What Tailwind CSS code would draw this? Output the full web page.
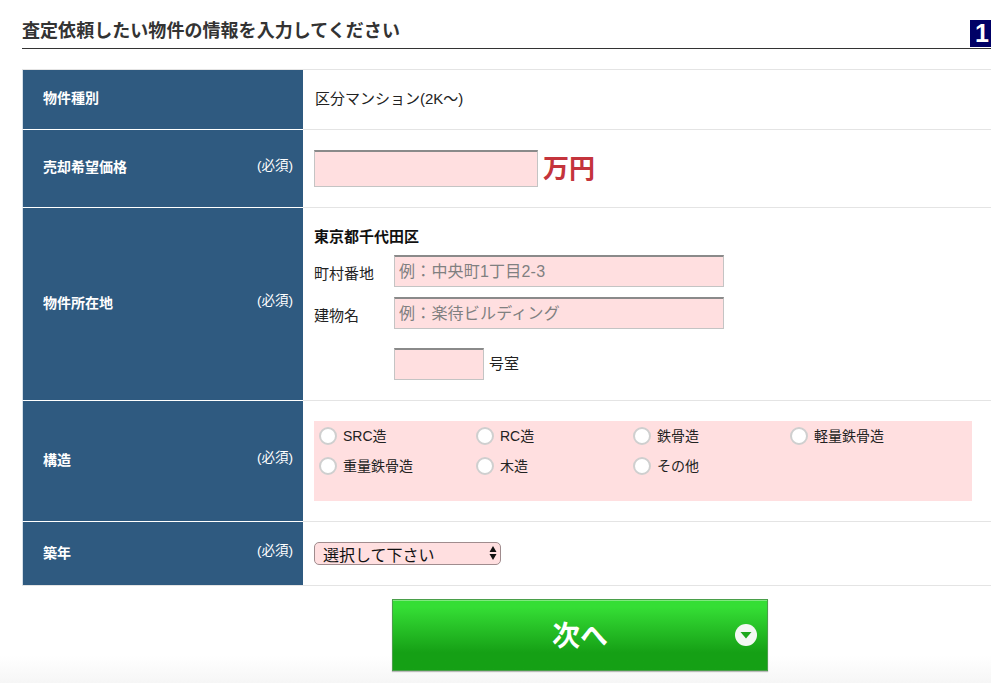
<!DOCTYPE html>
<html lang="ja">
  <head>
    <meta charset="UTF-8" />
    <title>査定依頼</title>
    <script src="https://cdn.jsdelivr.net/npm/@tailwindcss/browser@4"></script>
  </head>
  <body class="h-[683px] overflow-hidden bg-white font-['Liberation_Sans','Noto_Sans_CJK_JP',sans-serif] text-[15px] text-[#222]">
    <div class="relative h-[683px] overflow-hidden bg-gradient-to-b from-white from-[96%] to-[#f6f6f6] pl-[22px] pt-[20px]">
      <!-- heading -->
      <div class="flex h-[29px] w-[969px] items-start justify-between border-b border-[#333]">
        <h2 class="text-[18px] leading-[22px] tracking-[0.05px] font-bold text-[#333]">査定依頼したい物件の情報を入力してください</h2>
        <span class="h-[27px] w-[21px] bg-[#000066] pl-[5px] text-[25px] leading-[27px] font-bold text-white">1</span>
      </div>

      <!-- form table -->
      <div class="mt-[20px] w-[969px] border-t border-[#e4e4e4]">
        <div class="flex h-[60px] border-b border-[#e4e4e4]">
          <div class="-mb-px flex w-[281px] items-center border-b border-b-white border-l border-l-[#d5dfe8] bg-[#2f5a80] pl-[20px] text-[14px] text-white">
            <span class="mb-[2px] font-bold">物件種別</span>
          </div>
          <div class="flex flex-1 items-center pl-[12px]">区分マンション(2K〜)</div>
        </div>

        <div class="flex h-[78px] border-b border-[#e4e4e4]">
          <div class="-mb-px flex w-[281px] items-center justify-between border-b border-b-white border-l border-l-[#d5dfe8] bg-[#2f5a80] pr-[10px] pl-[20px] text-[14px] text-white">
            <span class="mb-[2px] font-bold">売却希望価格</span>
            <span class="mb-[4px] text-[13.5px]">(必須)</span>
          </div>
          <div class="flex flex-1 items-center pl-[11px]">
            <input type="text" class="h-[37px] w-[224px] border border-t-2 border-[#c4c4c4] border-t-[#8a8a8a] bg-[#ffdfe0]" />
            <span class="ml-[5px] text-[26px] leading-none font-bold text-[#c4343c]">万円</span>
          </div>
        </div>

        <div class="flex h-[193px] border-b border-[#e4e4e4]">
          <div class="-mb-px flex w-[281px] items-center justify-between border-b border-b-white border-l border-l-[#d5dfe8] bg-[#2f5a80] pr-[10px] pl-[20px] text-[14px] text-white">
            <span class="mb-[2px] font-bold">物件所在地</span>
            <span class="mb-[6px] text-[13.5px]">(必須)</span>
          </div>
          <div class="flex-1 pt-[19px] pl-[11px]">
            <p class="leading-[20px] font-bold text-[#111]">東京都千代田区</p>
            <div class="mt-[8px] flex items-center">
              <span class="w-[80px] pt-[6px]">町村番地</span>
              <input type="text" placeholder="例：中央町1丁目2-3" class="h-[32px] w-[330px] border border-t-2 border-[#c4c4c4] border-t-[#8a8a8a] bg-[#ffdfe0] pl-[4px] text-[16px] tracking-[0.2px] placeholder:text-[#808080]" />
            </div>
            <div class="mt-[10px] flex items-center">
              <span class="w-[80px] pt-[6px]">建物名</span>
              <input type="text" placeholder="例：楽待ビルディング" class="h-[32px] w-[330px] border border-t-2 border-[#c4c4c4] border-t-[#8a8a8a] bg-[#ffdfe0] pl-[4px] text-[16px] tracking-[0.2px] placeholder:text-[#808080]" />
            </div>
            <div class="mt-[19px] ml-[80px] flex items-center">
              <input type="text" class="h-[32px] w-[90px] border border-t-2 border-[#c4c4c4] border-t-[#8a8a8a] bg-[#ffdfe0]" />
              <span class="ml-[5px] pt-[1px]">号室</span>
            </div>
          </div>
        </div>

        <div class="flex h-[121px] border-b border-[#e4e4e4]">
          <div class="-mb-px flex w-[281px] items-center justify-between border-b border-b-white border-l border-l-[#d5dfe8] bg-[#2f5a80] pr-[10px] pl-[20px] text-[14px] text-white">
            <span class="mb-[2px] font-bold">構造</span>
            <span class="mb-[6px] text-[13.5px]">(必須)</span>
          </div>
          <div class="flex-1 pt-[20px] pl-[11px]">
            <div class="grid h-[80px] w-[658px] grid-cols-[157px_157px_157px_157px] content-start gap-y-[12px] bg-[#ffdfe0] pt-[6px] pl-[5px] text-[14px]">
              <label class="flex h-[18px] items-center gap-[6px]"><input type="radio" name="kozo" class="size-[18px] appearance-none rounded-full border-2 border-[#cfcfcf] bg-white" />SRC造</label>
              <label class="flex h-[18px] items-center gap-[6px]"><input type="radio" name="kozo" class="size-[18px] appearance-none rounded-full border-2 border-[#cfcfcf] bg-white" />RC造</label>
              <label class="flex h-[18px] items-center gap-[6px]"><input type="radio" name="kozo" class="size-[18px] appearance-none rounded-full border-2 border-[#cfcfcf] bg-white" />鉄骨造</label>
              <label class="flex h-[18px] items-center gap-[6px]"><input type="radio" name="kozo" class="size-[18px] appearance-none rounded-full border-2 border-[#cfcfcf] bg-white" />軽量鉄骨造</label>
              <label class="flex h-[18px] items-center gap-[6px]"><input type="radio" name="kozo" class="size-[18px] appearance-none rounded-full border-2 border-[#cfcfcf] bg-white" />重量鉄骨造</label>
              <label class="flex h-[18px] items-center gap-[6px]"><input type="radio" name="kozo" class="size-[18px] appearance-none rounded-full border-2 border-[#cfcfcf] bg-white" />木造</label>
              <label class="flex h-[18px] items-center gap-[6px]"><input type="radio" name="kozo" class="size-[18px] appearance-none rounded-full border-2 border-[#cfcfcf] bg-white" />その他</label>
            </div>
          </div>
        </div>

        <div class="flex h-[64px] border-b border-[#e4e4e4]">
          <div class="flex w-[281px] items-center justify-between border-l border-l-[#d5dfe8] bg-[#2f5a80] pr-[10px] pl-[20px] text-[14px] text-white">
            <span class="font-bold">築年</span>
            <span class="mb-[4px] text-[13.5px]">(必須)</span>
          </div>
          <div class="flex flex-1 items-center pl-[11px]">
            <div class="relative h-[23px] w-[187px]">
              <select class="h-[23px] w-[187px] appearance-none rounded-[5px] border border-[#a08c8e] bg-[#ffdfe0] pt-[2px] pl-[8px] text-[16px] leading-[21px] text-[#111]">
                <option>選択して下さい</option>
              </select>
              <svg class="pointer-events-none absolute top-[4px] right-[4px]" width="8" height="14" viewBox="0 0 8 14"><path d="M4 0L7.5 6H.5zM4 14L.5 8h7z" fill="#111" /></svg>
            </div>
          </div>
        </div>
      </div>

      <!-- next button -->
      <div class="mt-[13px] w-[969px]">
        <button type="button" class="relative ml-[370px] flex h-[72px] w-[376px] items-center justify-center border border-[#4a9f4a] bg-gradient-to-b from-[#35de35] from-[10%] to-[#15a015] to-[75%] pt-[3px] text-[28px] font-bold text-white shadow-[inset_0_1px_0_#7fe87f,0_1px_1px_rgba(0,0,0,0.25)]">
          次へ
          <svg class="absolute top-[24px] right-[10px]" width="22" height="22" viewBox="0 0 22 22"><circle cx="11" cy="11" r="11" fill="#f4f8f4" /><path d="M5.5 8h11L11 14.5z" fill="#1ea81e" /></svg>
        </button>
      </div>
    </div>
  </body>
</html>
